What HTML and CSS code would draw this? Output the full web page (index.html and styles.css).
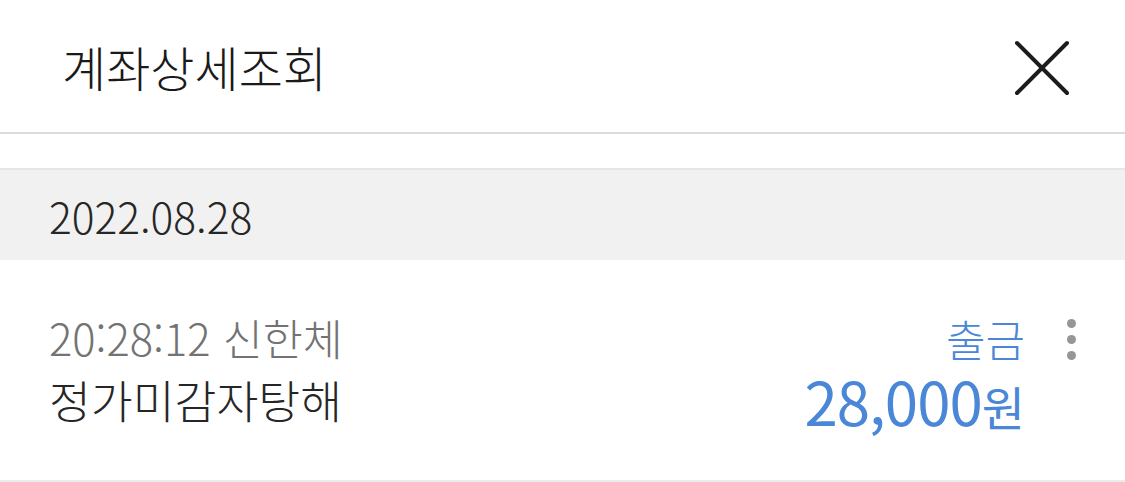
FILE: index.html
```html
<!DOCTYPE html>
<html lang="ko">
<head>
    <meta charset="UTF-8">
    <meta name="viewport" content="width=device-width, initial-scale=1.0">
    <title>계좌상세조회</title>
    <link rel="stylesheet" href="styles.css">
</head>
<body>
    <div class="header">
        <h1>계좌상세조회</h1>
        <button class="close-btn" aria-label="닫기">
            <svg width="56" height="56" viewBox="0 0 56 56">
                <path d="M3 3 L53 53 M53 3 L3 53" stroke="#1c1c1c" stroke-width="4" stroke-linecap="round" fill="none"/>
            </svg>
        </button>
    </div>

    <div class="spacer"></div>

    <div class="date-band">2022.08.28</div>

    <div class="tx-row">
        <div class="tx-left">
            <div class="tx-meta">20:28:12 신한체</div>
            <div class="tx-name">정가미감자탕해</div>
        </div>
        <div class="tx-right">
            <div class="tx-type">출금</div>
            <div class="tx-amount">28,000<span class="won">원</span></div>
        </div>
        <div class="kebab">
            <span></span><span></span><span></span>
        </div>
    </div>
</body>
</html>
```

FILE: styles.css
```css
* {
    margin: 0;
    padding: 0;
    box-sizing: border-box;
}

body {
    font-family: "Noto Sans CJK KR", "Noto Sans", sans-serif;
    font-weight: 300;
    background: #fff;
    color: #2b2b2b;
}

.header {
    height: 134px;
    display: flex;
    align-items: center;
    justify-content: space-between;
    padding: 0 55px 0 62px;
    border-bottom: 2px solid #dcdcdc;
}

h1 {
    font-size: 48px;
    font-weight: 300;
    color: #1a1a1a;
    margin-top: -1px;
}

.close-btn {
    background: none;
    border: none;
    display: flex;
    margin-top: 4px;
}

.spacer {
    height: 34px;
}

.date-band {
    height: 92px;
    border-top: 2px solid #e6e6e6;
    background: #f1f1f1;
    font-size: 42.5px;
    color: #262626;
    padding-left: 49px;
    display: flex;
    align-items: center;
}

.tx-row {
    height: 222px;
    display: flex;
    align-items: flex-start;
    padding: 48px 0 0 49px;
    border-bottom: 2px solid #ececec;
}

.tx-left {
    flex: 1;
}

.tx-meta {
    font-size: 43.5px;
    color: #737373;
    line-height: 60px;
}

.tx-name {
    font-size: 45.5px;
    color: #262626;
    line-height: 62px;
}

.tx-right {
    text-align: right;
}

.tx-type {
    font-size: 43px;
    color: #4a87d6;
    line-height: 60px;
}

.tx-amount {
    font-size: 60px;
    font-weight: 400;
    color: #4a87d6;
    line-height: 64px;
    letter-spacing: -1px;
}

.won {
    font-size: 47px;
    letter-spacing: 0;
}

.kebab {
    width: 100px;
    display: flex;
    flex-direction: column;
    align-items: center;
    gap: 7px;
    padding: 11px 8px 0 0;
}

.kebab span {
    width: 9px;
    height: 9px;
    border-radius: 50%;
    background: #969696;
}
```
